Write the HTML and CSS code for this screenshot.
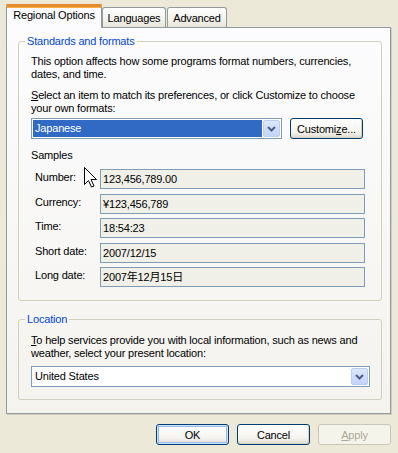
FILE: index.html
```html
<!DOCTYPE html>
<html>
<head>
<meta charset="utf-8">
<link rel="stylesheet" href="styles.css">
</head>
<body>
<div class="dialog">
  <div class="tabs">
    <div class="tab active">Regional Options</div>
    <div class="tab tab-lang">Languages</div>
    <div class="tab tab-adv">Advanced</div>
  </div>
  <div class="panel">
    <fieldset class="group group-std">
      <legend>Standards and formats</legend>
      <p class="text">This option affects how some programs format numbers, currencies,<br>dates, and time.</p>
      <p class="text text-gap"><u>S</u>elect an item to match its preferences, or click Customize to choose<br>your own formats:</p>
      <div class="combo-row">
        <div class="combo combo-locale">
          <span class="combo-value selected">Japanese</span>
          <span class="drop"><svg width="9" height="6" viewBox="0 0 9 6"><polyline points="1,1 4.5,4.5 8,1" fill="none" stroke="#4D6185" stroke-width="2"/></svg></span>
        </div>
        <button class="btn btn-customize">Customi<u>z</u>e...</button>
      </div>
      <div class="samples-title">Samples</div>
      <div class="samples">
        <div class="s-label">Number:</div><div class="s-box">123,456,789.00</div>
        <div class="s-label">Currency:</div><div class="s-box">¥123,456,789</div>
        <div class="s-label">Time:</div><div class="s-box">18:54:23</div>
        <div class="s-label">Short date:</div><div class="s-box">2007/12/15</div>
        <div class="s-label">Long date:</div><div class="s-box">2007年12月15日</div>
      </div>
    </fieldset>
    <fieldset class="group group-loc">
      <legend>Location</legend>
      <p class="text"><u>T</u>o help services provide you with local information, such as news and<br>weather, select your present location:</p>
      <div class="combo combo-country">
        <span class="combo-value">United States</span>
        <span class="drop"><svg width="9" height="6" viewBox="0 0 9 6"><polyline points="1,1 4.5,4.5 8,1" fill="none" stroke="#4D6185" stroke-width="2"/></svg></span>
      </div>
    </fieldset>
    <svg class="cursor" width="13" height="21" viewBox="0 0 13 21"><polygon points="0.5,0.5 0.5,17.5 4.5,13.5 7.5,20 10,19 7,12.5 12.5,12.5" fill="#fff" stroke="#000" stroke-width="1" stroke-linejoin="miter"/></svg>
  </div>
  <div class="buttons">
    <button class="btn btn-default">OK</button>
    <button class="btn">Cancel</button>
    <button class="btn btn-disabled"><u>A</u>pply</button>
  </div>
</div>
</body>
</html>
```
FILE: styles.css
```css
* { box-sizing: border-box; }
html, body {
  margin: 0;
  padding: 0;
  background: #ECE9D8;
  font-family: "Liberation Sans", Arial, "Noto Sans CJK JP", sans-serif;
  font-size: 11px;
  letter-spacing: -0.18px;
  color: #000;
}
.dialog {
  width: 398px;
  height: 453px;
  padding: 0 7px 0 6px;
}
.tabs {
  display: flex;
  align-items: flex-end;
  height: 27px;
  padding-top: 4px;
}
.tab {
  height: 20px;
  line-height: 19px;
  text-align: center;
  border: 1px solid #919B9C;
  border-bottom: none;
  border-radius: 3px 3px 0 0;
  background: linear-gradient(#FFFFFF, #F3F2EC 60%, #E6E4DA);
  padding-top: 1px;
}
.tab.active {
  position: relative;
  z-index: 1;
  width: 96px;
  height: 24px;
  margin-bottom: -1px;
  background: #FCFCFE;
  border-top: 3px solid #FFC83C;
  box-shadow: inset 0 1px 0 #F9B040;
  border-top-color: #E68B2C;
  line-height: 17px;
  padding-top: 0;
}
.tab.active::before {
  content: "";
  position: absolute;
  left: -1px;
  right: -1px;
  top: -3px;
  height: 1px;
  background: #E68B2C;
  border-radius: 3px 3px 0 0;
}
.tab-lang { width: 64px; }
.tab-adv { width: 60px; margin-left: 1px; }
.panel {
  position: relative;
  height: 387px;
  border: 1px solid #919B9C;
  background: linear-gradient(#FCFCFE, #F4F3EE);
  padding: 7px 8px 0 11px;
  box-shadow: 1px 1px 0 #D0CDBF;
}
.group {
  margin: 0;
  border: 1px solid #D0D0BF;
  border-radius: 3px;
  min-width: 0;
}
.group legend {
  color: #0046D5;
  line-height: 13px;
  padding: 0 2px;
  margin-left: -6px;
}
.group-std {
  padding: 7px 16px 13px 12px;
}
.group-loc {
  margin-top: 12px;
  padding: 8px 11px 12px 12px;
}
.text {
  margin: 0;
  line-height: 13px;
  white-space: nowrap;
}
.text-gap { margin-top: 8px; }
.combo-row {
  display: flex;
  align-items: flex-start;
  gap: 8px;
  margin-top: 3px;
}
.combo {
  display: flex;
  align-items: stretch;
  height: 21px;
  border: 1px solid #7F9DB9;
  background: #fff;
  padding: 1px;
}
.combo-locale { width: 251px; }
.combo-country { margin-top: 6px; }
.combo-value {
  flex: 1;
  line-height: 17px;
  padding-left: 2px;
}
.combo-value.selected {
  background: #316AC5;
  color: #fff;
}
.drop {
  width: 17px;
  margin-left: 1px;
  display: flex;
  align-items: center;
  justify-content: center;
  border: 1px solid #B9CDF7;
  border-radius: 2px;
  background: linear-gradient(#DCE6FD, #C3D4FB);
}
.btn {
  font: inherit;
  letter-spacing: inherit;
  color: #000;
  height: 21px;
  padding: 0;
  border: 1px solid #003C74;
  border-radius: 3px;
  background: linear-gradient(#FFFFFF, #F4F3EE 70%, #DCD8CC);
  box-shadow: inset -1px -1px 0 #D8D2BD;
}
.btn-customize { width: 73px; }
.samples-title {
  margin-top: 10px;
  line-height: 13px;
}
.samples {
  display: grid;
  grid-template-columns: 65px 1fr;
  grid-auto-rows: 20px;
  row-gap: 4.5px;
  padding-left: 4px;
  margin-top: 7px;
}
.s-label {
  line-height: 13px;
  padding-top: 2px;
}
.s-box {
  border: 1px solid #7F9DB9;
  background: #F0EFE8;
  line-height: 18px;
  padding-left: 2px;
}
.cursor {
  position: absolute;
  left: 77px;
  top: 139px;
}
.buttons {
  display: flex;
  justify-content: flex-end;
  gap: 8px;
  margin-top: 10px;
}
.buttons .btn { width: 73px; }
.btn-default {
  box-shadow: inset 0 0 0 1px #CEE7FF, inset 0 0 0 2px #98B8EA;
}
.btn-disabled {
  color: #ACA899;
  border-color: #C9C7BA;
  background: #F5F4EA;
  box-shadow: none;
}
```
